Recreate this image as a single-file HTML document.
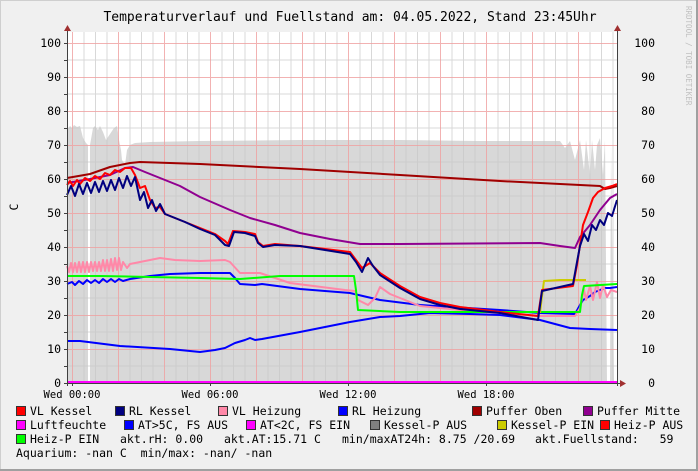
<!DOCTYPE html>
<html><head><meta charset="utf-8"><style>
html,body{margin:0;padding:0;background:#f0f0f0;}
body{width:698px;height:471px;overflow:hidden;position:relative;font-family:"DejaVu Sans Mono","Liberation Mono",monospace;}
.t{position:absolute;font-size:11.5px;color:#000;white-space:pre;line-height:14px;}
.sq{position:absolute;width:8px;height:8px;border:1px solid #333;}
</style></head><body>
<svg width="698" height="471" style="position:absolute;left:0;top:0">
<rect x="0.5" y="0.5" width="697" height="470" fill="#f0f0f0" stroke="#cfcfcf"/>
<line x1="697" y1="0" x2="697" y2="471" stroke="#a0a0a0" stroke-width="2"/>
<line x1="0" y1="470" x2="698" y2="470" stroke="#a0a0a0" stroke-width="2"/>
<rect x="67" y="32" width="550" height="351" fill="#fff"/>
<!-- fill level area -->
<polygon fill="#d8d8d8" points="67,383 67,130 70,126 72,128 74,125 77,127 80,126 83,138 86,143 88,145 88,383 90,383 90,145 93,128 95,126 98,130 100,126 103,132 106,140 110,134 114,128 117,126 119,140 121,150 122,160 125,165 127,150 130,145 135,143 150,142 200,141 300,140 400,140 480,141 540,141 560,141 565,148 570,141 575,160 580,140 584,170 586,140 590,175 592,140 595,170 597,145 600,138 603,175 605,140 607,383 610,383 611,145 614,383 617,383"/>
<g stroke-width="1">
<!-- minor vertical grid every 30min -->
<g stroke="#c8c8c8" opacity="0.7">
<path d="M84 32V383M95.5 32V383M107 32V383M130 32V383M141.5 32V383M153 32V383M176 32V383M187.5 32V383M199 32V383M222 32V383M233.5 32V383M245 32V383M268 32V383M279.5 32V383M291 32V383M314 32V383M325.5 32V383M337 32V383M360 32V383M371.5 32V383M383 32V383M406 32V383M417.5 32V383M429 32V383M452 32V383M463.5 32V383M475 32V383M498 32V383M509.5 32V383M521 32V383M544 32V383M555.5 32V383M567 32V383M590 32V383M601.5 32V383M613 32V383"/>
<path d="M67 366H617M67 332H617M67 298H617M67 264H617M67 230H617M67 196H617M67 162H617M67 128H617M67 94H617M67 60H617"/>
</g>
<g stroke="#f0a0a0" opacity="0.8">
<path d="M72.5 32V383M118.5 32V383M164.5 32V383M210.5 32V383M256.5 32V383M302.5 32V383M348.5 32V383M394.5 32V383M440.5 32V383M486.5 32V383M532.5 32V383M578.5 32V383"/>
<path d="M67 349.5H617M67 315.5H617M67 281.5H617M67 247.5H617M67 213.5H617M67 179.5H617M67 145.5H617M67 111.5H617M67 77.5H617M67 43.5H617"/>
</g>
</g>
<g fill="none" stroke-width="2" stroke-linejoin="round">
<!-- AT blue lower -->
<polyline stroke="#0000ff" points="67,341 80,341 120,346 170,349 200,352 215,350 225,348 235,343 245,340 250,338 255,340 262,339 300,332 320,328 350,322 380,317 400,316 430,313 470,314 500,315 540,320 570,328 590,329 617,330"/>
<!-- RL Heizung -->
<polyline stroke="#0000ff" points="67,284 72,282 75,285 79,281 83,284 87,280 91,283 95,280 99,283 103,279 107,282 111,279 115,282 119,279 123,281 130,279 150,276 160,275 170,274 200,273 230,273 235,278 240,284 255,285 262,284 300,289 350,293 380,300 420,305 500,310 540,313 575,314 580,305 583,300 590,296 595,292 600,290 605,288 610,288 617,287"/>
<!-- VL Heizung -->
<polyline stroke="#ff88a8" points="67,266 69,272 71,263 73,272 75,263 77,272 79,262 81,272 83,262 85,272 87,262 89,272 91,262 93,271 95,262 97,271 99,262 101,271 103,260 105,271 107,260 109,271 111,259 113,271 115,258 117,270 119,258 121,270 123,262 127,268 130,264 140,262 160,258 175,260 200,261 225,260 230,262 240,273 260,273 290,283 345,290 355,291 358,300 368,305 375,298 380,287 390,294 420,306 460,310 500,313 540,316 575,316 580,308 584,290 586,300 590,286 593,300 597,282 600,298 603,285 607,297 611,290 617,292"/>
<!-- Heiz-P EIN green -->
<polyline stroke="#00ff00" points="67,276 100,276 150,277 200,278 240,279 280,276 354,276 356,290 358,310 400,312 540,312 580,312 582,295 584,286 617,284"/>
<!-- Kessel-P EIN yellow -->
<polyline stroke="#cccc00" points="540,313 542,296 544,281 560,280 586,280"/>
<!-- Puffer Oben -->
<polyline stroke="#a00000" points="67,178 90,174 110,167 130,163 140,162 200,164 300,169 400,175 500,181 600,186 605,189 610,188 617,186"/>
<!-- Puffer Mitte -->
<polyline stroke="#900090" points="67,183 90,179 110,175 125,168 133,167 145,172 160,178 180,186 200,197 230,210 250,218 275,225 300,233 330,239 360,244 400,244 540,243 560,246 575,248 580,237 590,225 600,210 610,198 617,194"/>
<!-- VL Kessel -->
<polyline stroke="#ff0000" points="67,185 70,181 73,186 77,180 80,184 85,178 90,181 95,176 100,179 105,173 110,175 115,170 120,172 125,168 131,168 135,175 140,188 145,186 150,200 155,208 160,207 165,214 170,216 185,222 200,228 215,234 225,241 228,244 233,231 245,232 255,234 258,242 263,246 275,244 300,246 350,252 356,260 362,268 370,263 380,273 400,286 420,297 440,303 460,307 500,312 538,316 542,290 573,286 577,265 583,225 588,212 593,198 598,192 605,188 612,186 617,184"/>
<!-- RL Kessel -->
<polyline stroke="#000080" points="67,195 71,186 75,196 79,184 83,194 87,183 91,193 95,182 99,192 103,181 107,191 111,180 115,190 119,178 123,188 127,176 131,186 135,177 140,200 144,192 148,208 152,200 156,211 160,204 165,214 170,216 185,222 200,229 215,235 225,245 229,246 234,232 245,233 255,236 258,243 263,247 275,245 300,246 350,254 356,262 362,272 368,258 373,266 380,275 400,288 420,299 440,305 460,309 500,313 538,320 542,291 573,284 577,262 580,246 584,234 588,241 592,225 596,230 600,220 604,225 608,213 612,216 617,200"/>
<!-- Luftfeuchte bottom -->
<line x1="67" y1="382" x2="617" y2="382" stroke="#ff00ff"/>
</g>
<!-- axes -->
<g stroke="#404040" stroke-width="1">
<line x1="67.5" y1="30" x2="67.5" y2="386"/>
<line x1="617.5" y1="30" x2="617.5" y2="386"/>
<line x1="64" y1="383.5" x2="620" y2="383.5"/>
<path d="M64 366.5h3M64 349.5h3M64 332.5h3M64 315.5h3M64 298.5h3M64 281.5h3M64 264.5h3M64 247.5h3M64 230.5h3M64 213.5h3M64 196.5h3M64 179.5h3M64 162.5h3M64 145.5h3M64 128.5h3M64 111.5h3M64 94.5h3M64 77.5h3M64 60.5h3M64 43.5h3"/>
<path d="M72.5 383v3M210.5 383v3M348.5 383v3M486.5 383v3"/>
</g>
<g fill="#a03030">
<polygon points="64,31 71,31 67.5,25"/>
<polygon points="614,31 621,31 617.5,25"/>
<polygon points="620,380 620,387 626,383.5"/>
</g>
<text x="350" y="21" text-anchor="middle" font-family="DejaVu Sans Mono, Liberation Mono, monospace" font-size="13" fill="#000">Temperaturverlauf und Fuellstand am: 04.05.2022, Stand 23:45Uhr</text>
<g font-family="DejaVu Sans Mono, Liberation Mono, monospace" font-size="11.5" fill="#000">
<g text-anchor="end">
<text x="61" y="387">0</text><text x="61" y="353">10</text><text x="61" y="319">20</text><text x="61" y="285">30</text><text x="61" y="251">40</text><text x="61" y="217">50</text><text x="61" y="183">60</text><text x="61" y="149">70</text><text x="61" y="115">80</text><text x="61" y="81">90</text><text x="61" y="47">100</text>
</g>
<g text-anchor="end">
<text x="655" y="387">0</text><text x="655" y="353">10</text><text x="655" y="319">20</text><text x="655" y="285">30</text><text x="655" y="251">40</text><text x="655" y="217">50</text><text x="655" y="183">60</text><text x="655" y="149">70</text><text x="655" y="115">80</text><text x="655" y="81">90</text><text x="655" y="47">100</text>
</g>
<g text-anchor="middle" font-size="10.5">
<text x="72" y="398">Wed 00:00</text><text x="210" y="398">Wed 06:00</text><text x="348" y="398">Wed 12:00</text><text x="486" y="398">Wed 18:00</text>
</g>
<text x="18" y="207" text-anchor="middle" transform="rotate(-90 18 207)">C</text>
</g>
<text x="686" y="6" font-family="DejaVu Sans Mono, monospace" font-size="7.5" fill="#c0c0c0" transform="rotate(90 686 6)">RRDTOOL / TOBI OETIKER</text>
</svg>
<div class="sq" style="left:16px;top:406px;background:#ff0000"></div><div class="t" style="left:30px;top:404px">VL Kessel</div>
<div class="sq" style="left:115px;top:406px;background:#000080"></div><div class="t" style="left:129px;top:404px">RL Kessel</div>
<div class="sq" style="left:218px;top:406px;background:#ff88a8"></div><div class="t" style="left:232px;top:404px">VL Heizung</div>
<div class="sq" style="left:338px;top:406px;background:#0000ff"></div><div class="t" style="left:352px;top:404px">RL Heizung</div>
<div class="sq" style="left:472px;top:406px;background:#a00000"></div><div class="t" style="left:486px;top:404px">Puffer Oben</div>
<div class="sq" style="left:583px;top:406px;background:#900090"></div><div class="t" style="left:597px;top:404px">Puffer Mitte</div>

<div class="sq" style="left:16px;top:420px;background:#ff00ff"></div><div class="t" style="left:30px;top:418px">Luftfeuchte</div>
<div class="sq" style="left:124px;top:420px;background:#0000ff"></div><div class="t" style="left:138px;top:418px">AT&gt;5C, FS AUS</div>
<div class="sq" style="left:246px;top:420px;background:#ff00ff"></div><div class="t" style="left:260px;top:418px">AT&lt;2C, FS EIN</div>
<div class="sq" style="left:370px;top:420px;background:#808080"></div><div class="t" style="left:384px;top:418px">Kessel-P AUS</div>
<div class="sq" style="left:497px;top:420px;background:#cccc00"></div><div class="t" style="left:511px;top:418px">Kessel-P EIN</div>
<div class="sq" style="left:600px;top:420px;background:#ff0000"></div><div class="t" style="left:614px;top:418px">Heiz-P AUS</div>

<div class="sq" style="left:16px;top:434px;background:#00ff00"></div><div class="t" style="left:30px;top:432px">Heiz-P EIN</div>
<div class="t" style="left:120px;top:432px">akt.rH: 0.00</div>
<div class="t" style="left:224px;top:432px">akt.AT:15.71 C</div>
<div class="t" style="left:342px;top:432px">min/maxAT24h: 8.75 /20.69</div>
<div class="t" style="left:535px;top:432px">akt.Fuellstand:   59</div>
<div class="t" style="left:16px;top:446px">Aquarium: -nan C  min/max: -nan/ -nan</div>
</body></html>
